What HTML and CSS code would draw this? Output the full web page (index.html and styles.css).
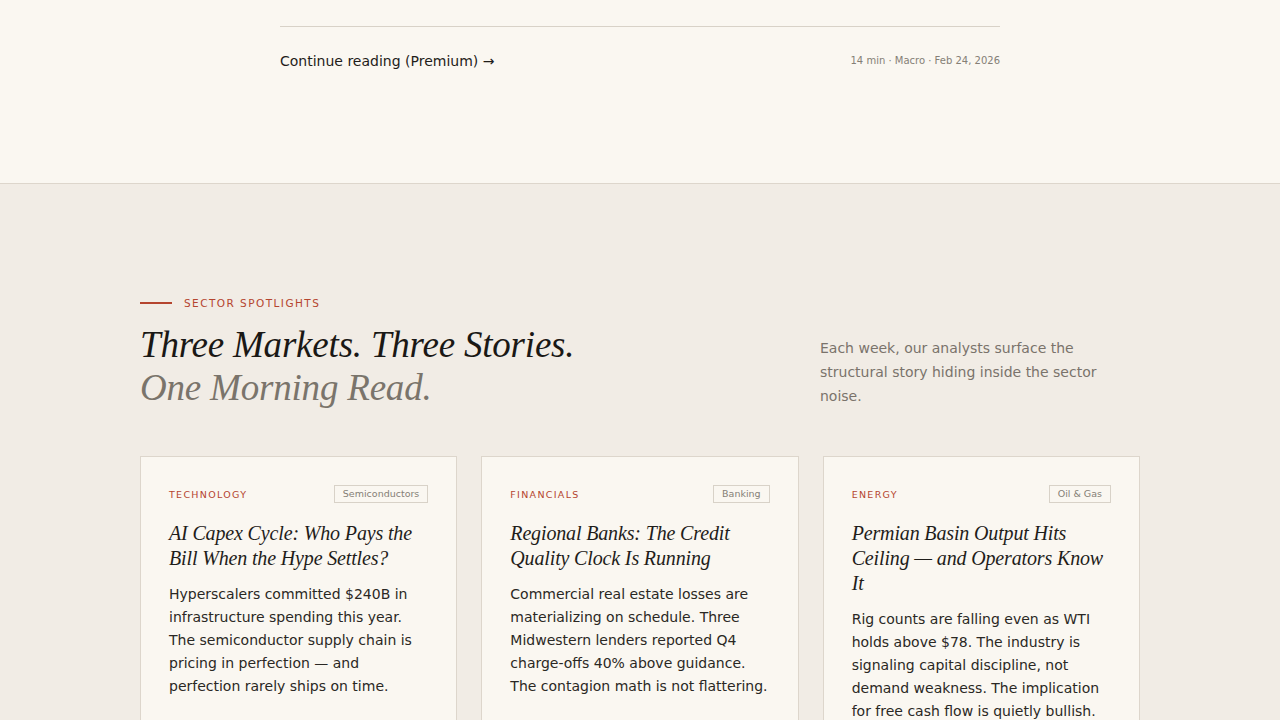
FILE: index.html
```html
<!DOCTYPE html>
<html lang="en">
<head>
<meta charset="utf-8">
<title>Sector Spotlights</title>
<link rel="stylesheet" href="styles.css">
</head>
<body>
<section class="article-end">
  <div class="article-inner">
    <div class="article-foot">
      <a class="continue" href="#">Continue reading (Premium) →</a>
      <span class="meta">14 min · Macro · Feb 24, 2026</span>
    </div>
  </div>
</section>
<section class="spotlights">
  <div class="container">
    <div class="eyebrow"><span class="eyebrow-line"></span><span>SECTOR SPOTLIGHTS</span></div>
    <div class="header">
      <h2 class="headline">Three Markets. Three Stories.<br><span class="muted">One Morning Read.</span></h2>
      <p class="lede">Each week, our analysts surface the structural story hiding inside the sector noise.</p>
    </div>
    <div class="cards">
      <article class="card">
        <div class="card-top"><span class="cat">TECHNOLOGY</span><span class="tag">Semiconductors</span></div>
        <h3 class="card-title">AI Capex Cycle: Who Pays the Bill When the Hype Settles?</h3>
        <p class="card-body">Hyperscalers committed $240B in infrastructure spending this year. The semiconductor supply chain is pricing in perfection — and perfection rarely ships on time.</p>
      </article>
      <article class="card">
        <div class="card-top"><span class="cat">FINANCIALS</span><span class="tag">Banking</span></div>
        <h3 class="card-title">Regional Banks: The Credit Quality Clock Is Running</h3>
        <p class="card-body">Commercial real estate losses are materializing on schedule. Three Midwestern lenders reported Q4 charge-offs 40% above guidance. The contagion math is not flattering.</p>
      </article>
      <article class="card">
        <div class="card-top"><span class="cat">ENERGY</span><span class="tag">Oil &amp; Gas</span></div>
        <h3 class="card-title">Permian Basin Output Hits Ceiling — and Operators Know It</h3>
        <p class="card-body">Rig counts are falling even as WTI holds above $78. The industry is signaling capital discipline, not demand weakness. The implication for free cash flow is quietly bullish.</p>
      </article>
    </div>
  </div>
</section>
</body>
</html>
```
FILE: styles.css
```css
* { box-sizing: border-box; }
html, body { margin: 0; padding: 0; }
body {
  font-family: "DejaVu Sans", sans-serif;
  color: #1f1d1a;
  background: #f1ece5;
}
.article-end {
  background: #faf7f1;
  border-bottom: 1px solid #ddd6cc;
  padding-top: 26px;
  height: 184px;
}
.article-inner {
  width: 720px;
  margin: 0 auto;
  border-top: 1px solid #d8d2c8;
}
.article-foot {
  display: flex;
  justify-content: space-between;
  align-items: center;
  padding-top: 24px;
  height: 44px;
}
.continue {
  font-size: 14px;
  line-height: 20px;
  color: #1f1d1a;
  text-decoration: none;
}
.meta {
  font-size: 10px;
  color: #857f76;
  margin-top: -1px;
}
.spotlights {
  padding: 112px 0 0;
}
.container {
  width: 1000px;
  margin: 0 auto;
}
.eyebrow {
  display: flex;
  align-items: center;
  gap: 12px;
  font-size: 10.5px;
  line-height: 14px;
  letter-spacing: 1.45px;
  color: #b5452f;
}
.eyebrow-line {
  display: inline-block;
  width: 32px;
  height: 2px;
  background: #b5452f;
}
.header {
  display: flex;
  justify-content: space-between;
  align-items: flex-end;
  margin-top: 13px;
  margin-bottom: 47px;
}
.headline {
  margin: 0;
  font-family: "Liberation Serif", serif;
  font-style: italic;
  font-weight: 400;
  font-size: 37px;
  line-height: 43px;
  letter-spacing: -0.2px;
  color: #1a1815;
}
.headline .muted { color: #7a746b; }
.lede {
  margin: 0 0 1px;
  width: 320px;
  font-size: 14px;
  line-height: 24px;
  color: #7a736b;
}
.cards {
  display: grid;
  grid-template-columns: repeat(3, 1fr);
  gap: 24px;
}
.card {
  background: #faf7f1;
  border: 1px solid #ddd6cc;
  padding: 28px 28px 28px;
  min-height: 280px;
}
.card-top {
  display: flex;
  justify-content: space-between;
  align-items: center;
  height: 18px;
}
.cat {
  font-size: 9.5px;
  letter-spacing: 1.3px;
  color: #b5452f;
}
.tag {
  font-size: 9.5px;
  line-height: 16px;
  padding: 0 8px;
  border: 1px solid #d8d2c8;
  color: #857f76;
}
.card-title {
  margin: 18px 0 0;
  font-family: "Liberation Serif", serif;
  font-style: italic;
  font-weight: 400;
  font-size: 20px;
  line-height: 25px;
  letter-spacing: -0.15px;
  color: #1f1d1a;
}
.card-body {
  margin: 12px 0 0;
  font-size: 14px;
  line-height: 23px;
  color: #2a2824;
}
```
